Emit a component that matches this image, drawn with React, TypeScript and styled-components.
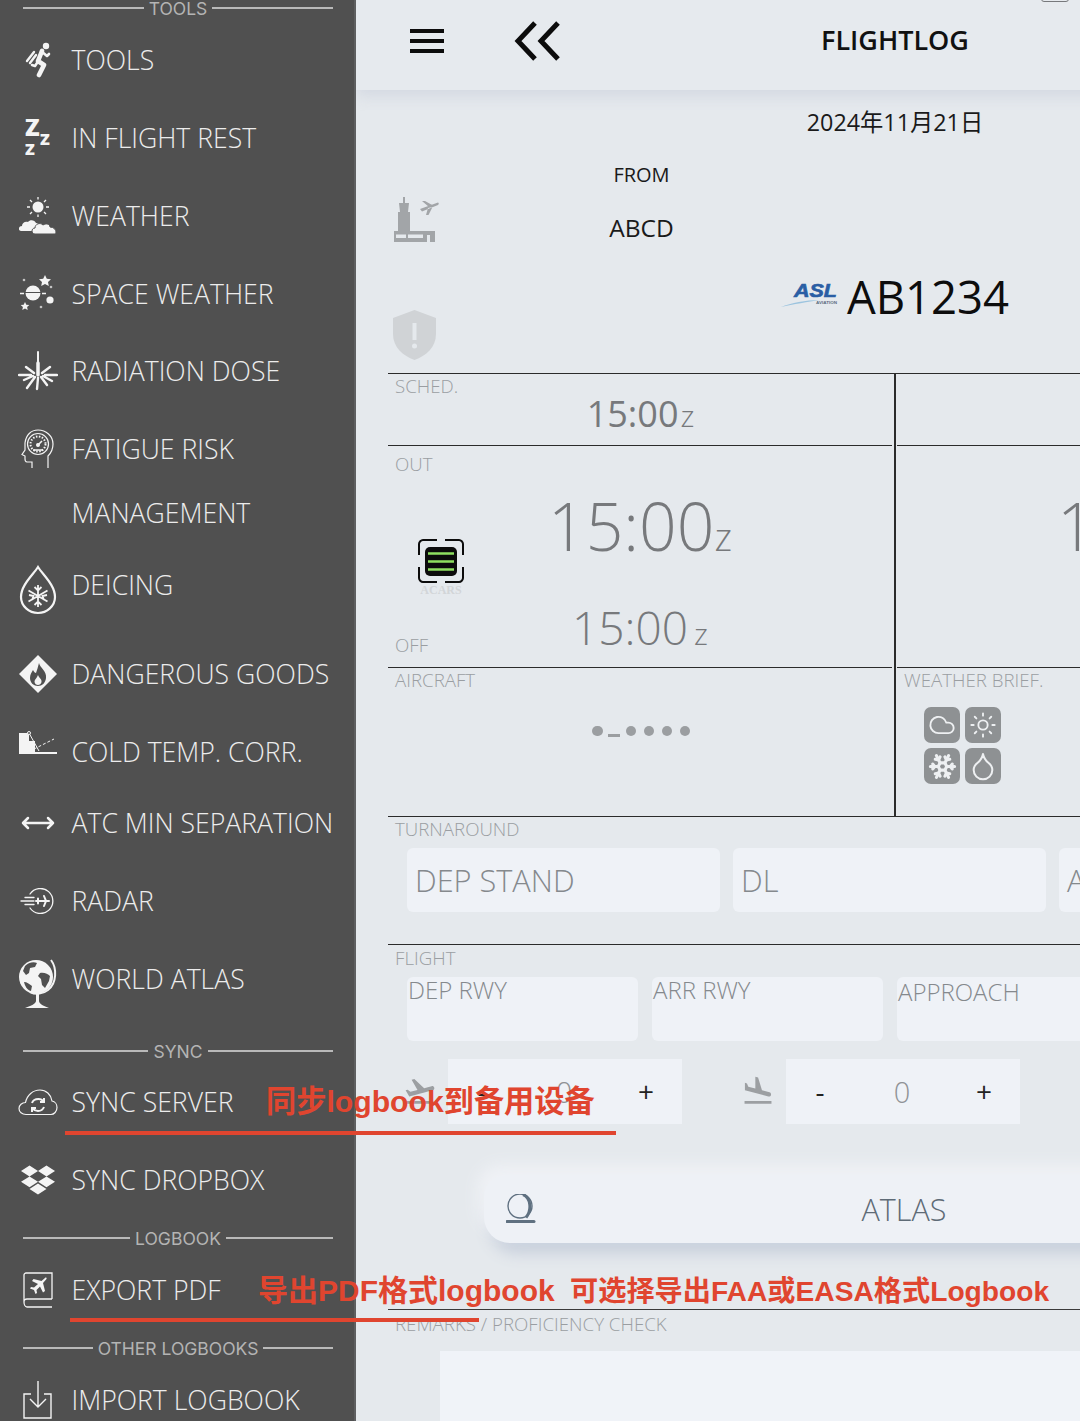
import React from 'react';
import styled, { createGlobalStyle } from 'styled-components';
import { Cloud, Droplet, Snowflake, Sun } from 'lucide-react';
import { FaDropbox } from 'react-icons/fa';
import { MdFlightLand, MdFlightTakeoff } from 'react-icons/md';

const GlobalStyle = createGlobalStyle`
  html, body {
    margin: 0;
    padding: 0;
    background: #e5e9ed;
  }
  body {
    font-family: "Open Sans", "Noto Sans CJK SC", sans-serif;
  }
  * {
    box-sizing: border-box;
  }
`;

const Page = styled.div`
  position: relative;
  display: flex;
  width: 1080px;
  height: 1421px;
  overflow: hidden;
`;

/* ---------- sidebar ---------- */

const Sidebar = styled.nav`
  position: relative;
  z-index: 1;
  flex: 0 0 356px;
  height: 1421px;
  overflow: hidden;
  background: #505050;
  border-right: 2px solid #5e5f60;
`;

const SectionRule = styled.div<{ $height: number }>`
  display: flex;
  align-items: center;
  gap: 5px;
  height: ${p => p.$height}px;
  padding: 0 21px 0 23px;
  color: #b4b4b4;
  font-family: Inter, "Liberation Sans", sans-serif;
  font-size: 17.5px;
  font-weight: 400;
  &::before,
  &::after {
    content: '';
    flex: 1;
    height: 1.5px;
    background: #b9b9b9;
  }
`;

const NavRow = styled.div<{ $height: number }>`
  display: flex;
  align-items: center;
  height: ${p => p.$height}px;
  padding-bottom: 2px;
  color: #ececec;
  font-size: 26.6px;
  font-weight: 300;
  white-space: nowrap;
`;

const Spacer = styled.div<{ $height: number }>`
  height: ${p => p.$height}px;
`;

const IconSlot = styled.span<{ $nudge?: number }>`
  display: flex;
  flex: 0 0 40px;
  justify-content: center;
  margin: ${p => (p.$nudge || 0) * 2}px 13.5px 0 18px;
  color: #f4f4f4;
`;

/* ---------- main ---------- */

const Main = styled.main`
  flex: 0 0 1078px;
  background: #e5e9ed;
`;

const TopBar = styled.header`
  position: relative;
  display: flex;
  align-items: center;
  justify-content: center;
  height: 90px;
  background: #e6eaee;
  box-shadow: 0 6px 14px rgba(190, 198, 212, 0.45);
`;

const TopButtons = styled.div`
  position: absolute;
  top: 21px;
  left: 54px;
  display: flex;
  align-items: center;
  gap: 70px;
`;

const Title = styled.h1`
  margin: 0 0 11px;
  color: #111;
  font-size: 27px;
  font-weight: 600;
`;

const StatusPill = styled.span`
  position: absolute;
  top: -8px;
  left: 685px;
  width: 28px;
  height: 10px;
  border: 1px solid #77797c;
  border-radius: 3px;
`;

const DateLine = styled.div`
  display: flex;
  align-items: center;
  justify-content: center;
  height: 66px;
  padding-bottom: 4px;
  color: #1a1a1a;
  font-size: 23.3px;
`;

const HeaderGrid = styled.section`
  display: grid;
  grid-template-columns: 507px;
  grid-template-rows: 104px 113px;
  width: 1014px;
  margin-left: 32px;
`;

const TowerSlot = styled.div`
  grid-area: 1 / 1;
  margin: 41px 0 0 5px;
`;

const Route = styled.div`
  display: flex;
  flex-direction: column;
  grid-area: 1 / 1;
  align-items: center;
  color: #1a1a1a;
`;

const RouteLabel = styled.span`
  height: 38px;
  font-size: 20px;
  line-height: 38px;
`;

const RouteValue = styled.span`
  margin-top: 15px;
  font-size: 24.5px;
  line-height: 38px;
`;

const ShieldSlot = styled.div`
  grid-area: 2 / 1;
  margin: 50px 0 0 5px;
`;

const FlightNumber = styled.div`
  display: flex;
  grid-area: 2 / 1 / 2 / 3;
  align-items: center;
  justify-content: center;
  width: 1014px;
  height: 72px;
  gap: 6px;
  color: #0d0d0d;
  font-size: 45.5px;
  font-weight: 500;
`;

const Table = styled.section`
  display: flex;
  width: 1014px;
  margin-left: 32px;
  border-top: 1.5px solid #2b2b2b;
  border-bottom: 1.5px solid #2b2b2b;
`;

const TableCol = styled.div<{ $right?: boolean }>`
  flex: 0 0 507px;
  height: 442px;
  padding: ${p => (p.$right ? '0 0 0 1px' : '0 3px 0 0')};
  border-left: ${p => (p.$right ? '2px solid #2b2b2b' : 'none')};
  margin-left: ${p => (p.$right ? '-1px' : '0')};
`;

const Cell = styled.div<{ $height: number; $last?: boolean }>`
  display: flex;
  flex-direction: column;
  height: ${p => p.$height}px;
  border-bottom: ${p => (p.$last ? 'none' : '1.5px solid #2b2b2b')};
`;

const FieldLabel = styled.div`
  height: 24px;
  padding-left: 7px;
  color: #9a9ea2;
  font-size: 18.7px;
  font-weight: 300;
  line-height: 24px;
  white-space: nowrap;
`;

const TimeText = styled.div<{ $size: number; $unit: number; $gap?: number }>`
  color: #77797c;
  font-size: ${p => p.$size}px;
  font-weight: 300;
  line-height: 1;
  text-align: center;
  white-space: nowrap;
  & small {
    margin-left: ${p => p.$gap || 0}px;
    font-size: ${p => p.$unit}px;
    font-weight: 300;
  }
`;

const SchedTime = styled(TimeText)`
  margin: -2px 0 0 1px;
  font-weight: 400;
`;

const BlockBody = styled.div`
  display: flex;
  flex: 1;
  flex-direction: column;
  align-items: center;
`;

const BlockLabels = styled.div`
  display: flex;
  flex: 1;
  align-self: stretch;
  flex-direction: column;
  justify-content: space-between;
  padding: 6px 0 10px;
`;

const OutRow = styled.div`
  display: grid;
  grid-template-columns: 130px 1fr 130px;
  flex: 1;
`;

const TimesCol = styled.div`
  display: flex;
  flex-direction: column;
  align-items: center;
  padding-top: 46px;
  gap: 46px;
`;

const Acars = styled.div`
  display: flex;
  flex-direction: column;
  align-items: center;
  width: 46px;
  margin: 26px 0 0 30px;
`;

const AcarsCaption = styled.span`
  margin-top: 1px;
  color: #d2d5d8;
  font-family: "Liberation Serif", serif;
  font-size: 12px;
  font-weight: 700;
  line-height: 13px;
`;

const RegDots = styled.div`
  display: flex;
  align-items: center;
  justify-content: center;
  gap: 7.5px;
  height: 72px;
  margin: 3px 0 0 2px;
`;

const RegDot = styled.span`
  width: 10.5px;
  height: 10.5px;
  border-radius: 50%;
  background: #9b9ea1;
`;

const RegDash = styled.span`
  width: 12px;
  height: 3px;
  margin: 9px -2px 0 -2px;
  background: #9b9ea1;
`;

const BriefGrid = styled.div`
  display: grid;
  grid-template-columns: 36px 36px;
  gap: 5px;
  margin: 15px 0 0 27px;
`;

const BriefTile = styled.span`
  display: flex;
  align-items: center;
  justify-content: center;
  width: 36px;
  height: 36px;
  border-radius: 7px;
  background: #8e9193;
  color: #eef0f2;
`;

const Section = styled.section`
  width: 1014px;
  margin-left: 32px;
  padding-top: 0.5px;
`;

const RuledSection = styled(Section)`
  height: 128px;
  padding-top: 0;
  border-bottom: 1.5px solid #2b2b2b;
`;

const InputRow = styled.div<{ $gap: number }>`
  display: flex;
  gap: ${p => p.$gap}px;
  margin: 7px 0 0 19px;
`;

const WideField = styled.div`
  flex: 0 0 313px;
  height: 64px;
  padding: 0 8px;
  overflow: hidden;
  border-radius: 6px;
  background: #eff2f7;
  color: #85898d;
  font-size: 30.7px;
  font-weight: 300;
  line-height: 64px;
  white-space: nowrap;
`;

const RunwayField = styled.div<{ $drop?: boolean }>`
  flex: 0 0 231px;
  height: 64px;
  padding: ${p => (p.$drop ? '2px' : '0')} 1px;
  border-radius: 6px;
  background: #eff2f7;
  color: #85898d;
  font-size: 24px;
  font-weight: 300;
  line-height: 1.05;
  white-space: nowrap;
`;

const Steppers = styled.div`
  display: flex;
  gap: 62px;
  margin: 18px 0 0 18px;
`;

const StepperGroup = styled.div`
  display: grid;
  grid-template-columns: 42px 234px;
  align-items: center;
`;

const StepperIcon = styled.span`
  display: flex;
  margin-left: -3px;
  color: #9c9fa2;
`;

const Stepper = styled.div`
  display: grid;
  grid-template-columns: 68px 96px 68px;
  align-items: center;
  height: 65px;
  background: #eff2f7;
  color: #222;
  font-size: 28px;
  font-weight: 400;
  text-align: center;
`;

const StepperValue = styled.span`
  color: #8f9396;
  font-size: 29px;
  font-weight: 300;
`;

const AtlasButton = styled.div`
  display: grid;
  grid-template-columns: 60px 1fr 60px;
  align-items: center;
  width: 840px;
  height: 68px;
  margin: 51px 0 0 128px;
  padding-left: 22px;
  border-radius: 22px 0 0 26px;
  background: #eef1f6;
  box-shadow: -6px -10px 16px #f0f2f6, 6px 10px 16px #c6cedb;
  color: #5e6b76;
  font-size: 30.5px;
  font-weight: 300;
`;

const AtlasLabel = styled.span`
  margin-left: -22px;
  text-align: center;
`;

const RemarkSection = styled(Section)`
  margin-top: 66px;
  padding-top: 2px;
  border-top: 1.5px solid #3a3a3a;
`;

const RemarkBox = styled.div`
  width: 900px;
  height: 90px;
  margin: 15px 0 0 52px;
  background: #f0f3f8;
`;

/* ---------- annotations laid over the screenshot ---------- */

const Note = styled.span<{ $x: number; $y: number; $size: number }>`
  position: absolute;
  z-index: 2;
  top: ${p => p.$y}px;
  left: ${p => p.$x}px;
  color: #e0452f;
  font-family: "Liberation Sans", "Noto Sans CJK SC", sans-serif;
  font-size: ${p => p.$size}px;
  font-weight: 700;
  line-height: 36px;
  white-space: pre;
`;

const NoteLine = styled.span<{ $x: number; $y: number; $width: number }>`
  position: absolute;
  z-index: 2;
  top: ${p => p.$y}px;
  left: ${p => p.$x}px;
  width: ${p => p.$width}px;
  height: 4px;
  background: #e0452f;
`;

/* ---------- drawn icons ---------- */

const JetpackIcon = () => (
  <svg width="26" height="36" viewBox="0 0 26 36" fill="none" stroke="currentColor" strokeLinecap="round" strokeLinejoin="round">
    <circle cx="21" cy="4" r="3.2" fill="currentColor" stroke="none" />
    <path d="M17 9 L13 19 L19 23 L14 33" strokeWidth="4.6" />
    <path d="M16 9 L22 14 L24 12 M14 18 L10 24 L7 23" strokeWidth="2.6" />
    <path d="M9 10 L2 19 M11 13 L5 21" strokeWidth="2.4" />
  </svg>
);

const ZzzIcon = () => (
  <svg width="32" height="38" viewBox="0 0 32 38" fill="currentColor" fontFamily="Open Sans, sans-serif" fontWeight="800">
    <text x="3" y="17" fontSize="24">Z</text>
    <text x="18" y="26" fontSize="16">Z</text>
    <text x="3" y="36" fontSize="16">Z</text>
  </svg>
);

const WeatherIcon = () => (
  <svg width="38" height="38" viewBox="0 0 38 38" fill="currentColor" stroke="currentColor">
    <circle cx="19" cy="10" r="5.5" stroke="none" />
    <path d="M19 0v2.5M19 17.5v2.5M8 10h3M27 10h3M11 3l2 2M27 3l-2 2M11 17l2-2M27 17l-2-2" strokeWidth="1.3" fill="none" />
    <path d="M2 34c-3 0-3-5 1-5 0-3 3-5 6-4 2-3 7-2 8 1 2 0 3 1 3 3l-4 5z" stroke="none" />
    <path d="M16 37c-4 0-4-6 0-6 0-4 5-6 8-3 3-2 7-1 7 2 4 0 6 3 6 5s-1 2-3 2z" stroke="#505050" strokeWidth="1" />
  </svg>
);

const SpaceIcon = () => (
  <svg width="38" height="38" viewBox="0 0 38 38" fill="currentColor" stroke="currentColor">
    <circle cx="14" cy="18" r="7.5" stroke="none" />
    <path d="M1 18.5h4M23 18.5h4" strokeWidth="1.5" />
    <path d="M6 17.5h16" stroke="#505050" strokeWidth="1" />
    <path d="M26 0l1.8 3.8 4.2.4-3 2.800.8 4.100-3.800-2-3.800 2 .8-4.100-3-2.800 4.200-.4zM6 27l1.300 2.800 3 .3-2.200 2 .6 3-2.700-1.500-2.700 1.500.6-3-2.200-2 3-.3z" stroke="none" />
    <circle cx="31" cy="25" r="3.6" stroke="none" />
    <circle cx="5" cy="5" r="1.3" stroke="none" opacity=".7" />
    <circle cx="32" cy="12" r="1.3" stroke="none" opacity=".7" />
    <circle cx="22" cy="32" r="1.3" stroke="none" opacity=".7" />
  </svg>
);

const RadiationIcon = () => (
  <svg width="40" height="40" viewBox="0 0 40 40" stroke="currentColor" strokeLinecap="round" fill="none">
    <path d="M20 1v22" strokeWidth="2" />
    <path d="M20 12v12" strokeWidth="3.5" />
    <path d="M1 24h12M27 24h12M17 26L9 37M23 26l6 8M20 27l-1 11M24 22l8-6M16 22L8 16M25 25l9 5M15 25l-9 4" strokeWidth="2.4" />
  </svg>
);

const FatigueIcon = () => (
  <svg width="34" height="40" viewBox="0 0 34 40" fill="none" stroke="currentColor" strokeWidth="1.2">
    <path d="M11 39v-6H6c-1.500 0-2-1.500-2-3v-3l-3-1.500 3-4.500v-7C5 6 10 1 17 1c8 0 15 6 15 14 0 5-2 9-5 12v12" />
    <circle cx="17" cy="15" r="10.5" />
    <circle cx="17" cy="15" r="7.5" strokeDasharray="1.5 1.5" strokeWidth="2" />
    <path d="M12 21h10M17 16l4-4" strokeWidth="1.6" />
    <circle cx="17" cy="16" r="1.4" fill="currentColor" />
  </svg>
);

const DeicingIcon = () => (
  <svg width="38" height="50" viewBox="0 0 38 50" fill="none" stroke="currentColor">
    <path d="M19 2C14 10 2 20 2 32c0 9 8 16 17 16s17-7 17-16C36 20 24 10 19 2z" strokeWidth="2.2" />
    <path d="M19 20v22M9.500 25.500l19 11M28.500 25.500l-19 11M15.500 22l3.500 3.500 3.500-3.500M15.500 40l3.500-3.500 3.500 3.500M10 30l4.500 1-1.500 4M28 30l-4.500 1 1.500 4" strokeWidth="1.8" />
  </svg>
);

const HazardIcon = () => (
  <svg width="38" height="38" viewBox="0 0 38 38">
    <path d="M19 0l19 19-19 19L0 19z" fill="currentColor" />
    <path d="M20 8c1 5 8 8 7 15-.5 5-4 8-8 8s-8-3-8-8c0-4 2-6 3-8 1 2 2 3 3 3 1-3 2-6 3-10z" fill="#505050" />
    <path d="M19 20c1 3 4 4 3.500 7-.3 2-2 3-3.500 3s-3.500-1-3.500-3.500c0-2 2.500-3.500 3.500-6.500z" fill="currentColor" />
  </svg>
);

const ColdTempIcon = () => (
  <svg width="38" height="24" viewBox="0 0 38 24" fill="currentColor" stroke="currentColor">
    <path d="M0 2h10v8h6v13H0z" stroke="none" />
    <path d="M16 22h22" strokeWidth="2" />
    <path d="M10 2l10 18" strokeWidth="1" fill="none" />
    <path d="M15 18L35 8" strokeWidth="1" strokeDasharray="3 2" fill="none" />
    <circle cx="10" cy="2" r="1.5" fill="#505050" strokeWidth="1" />
  </svg>
);

const SeparationIcon = () => (
  <svg width="34" height="14" viewBox="0 0 34 14" fill="none" stroke="currentColor" strokeWidth="2.5" strokeLinecap="round" strokeLinejoin="round">
    <path d="M2 7h30M7 2L2 7l5 5M27 2l5 5-5 5" />
  </svg>
);

const RadarIcon = () => (
  <svg width="36" height="26" viewBox="0 0 36 26" fill="none" stroke="currentColor" strokeLinecap="round">
    <path d="M10 6a12.500 12.500 0 1 1 0 14" strokeWidth="1.3" />
    <path d="M1 13h13M5 9.500h9M5 16.500h9" strokeWidth="1.3" />
    <path d="M16 13h13M24 8l2 5-2 5M18 10.500v5" strokeWidth="2" />
  </svg>
);

const GlobeIcon = () => (
  <svg width="40" height="54" viewBox="0 0 40 54">
    <circle cx="18" cy="20" r="17" fill="currentColor" />
    <path d="M7 9c3-3 8-5 12-3l-2 4-5 1-1 5-3 2-3-4zM22 16c4-1 8 1 10 3l-1 5-4 7-3-3-1-6-3-3zM6 25c3 0 5 2 8 4l-1 5c-4-1-6-5-7-9z" fill="#505050" />
    <path d="M33 3c6 8 6 23-3 30-5 4-12 5-18 2" fill="none" stroke="currentColor" strokeWidth="2" />
    <path d="M18 37v7c0 3-6 5-11 7h24c-5-2-10-4-10-7v-7z" fill="currentColor" />
  </svg>
);

const CloudSyncIcon = () => (
  <svg width="40" height="27" viewBox="0 0 40 27" fill="none" stroke="currentColor" strokeWidth="1.2">
    <path d="M8 25.500C4 25.500 1 23 1 19.500c0-3.500 3-6 6.500-6C9 6 15 1 22 1c6 0 11 4.500 12 11 3 .5 5 3.500 5 6.500 0 4-3 7-6 7z" />
    <path d="M14 14c1-3 4-4 6.500-4 2 0 4 1 5 2.500M26 9v4h-4M26 18c-1 2.500-3.500 4-6 4-2 0-4-1-5.500-2.500M14 23v-4h4" strokeWidth="2" />
  </svg>
);

const ExportIcon = () => (
  <svg width="30" height="37" viewBox="0 0 30 37" fill="none" stroke="currentColor" strokeWidth="1.3">
    <path d="M29 27H4c-2 0-3 1-3 3s1 5 3 5h25M1 30V3c0-1 1-2 2-2h26v26" />
    <path d="M22 6c1-1 2 0 1.500 1L20 11l2 8-2 1.500-3-6-3.500 3.500.5 3-1.500 1-1.500-4-4-1.500 1-1.500 3 .5L15 12 9 9l1.500-2 8 2z" fill="currentColor" stroke="none" />
  </svg>
);

const ImportIcon = () => (
  <svg width="30" height="38" viewBox="0 0 30 38" fill="none" stroke="currentColor" strokeWidth="1.4">
    <path d="M8 13H1v24h27V13h-7M15 0v25M7 18l8 8 8-8" />
  </svg>
);

const TowerIcon = () => (
  <svg width="46" height="46" viewBox="0 0 46 46" fill="#a2a5a8">
    <path d="M10 0h2v6h-2zM6 6h10l-1 9H7zM5 15h12v20H5z" />
    <path d="M1 34h41v11h-5V38h-3v7H1z" />
    <path d="M3 37.500h10V41H3zM15 37.500h15V41H15z" fill="#e5e9ed" />
    <path d="M27 12l18-6.500c1 .5 1 1.500 0 2.500L29 14.500zM29 4h3l8 4.500-4 1.500zM33 18h2.500l4-8-4.500 1z" />
  </svg>
);

const ShieldIcon = () => (
  <svg width="43" height="50" viewBox="0 0 43 50">
    <path d="M21.500 0L43 8v16c0 13-10 22-21.500 26C10 46 0 37 0 24V8z" fill="#d0d3d6" />
    <path d="M19.500 13h4v17h-4z" fill="#e5e9ed" />
    <circle cx="21.5" cy="36" r="2.5" fill="#e5e9ed" />
  </svg>
);

const AslLogo = () => (
  <svg width="60" height="27" viewBox="0 0 60 27">
    <path d="M0 24C10 20 25 17 38 17C28 19 12 21 0 24Z" fill="#9cc4df" />
    <text x="13" y="14" fill="#2a5ea4" stroke="#2a5ea4" strokeWidth=".6" fontFamily="Liberation Sans, sans-serif" fontSize="18" fontStyle="italic" fontWeight="700" textLength="43" lengthAdjust="spacingAndGlyphs">ASL</text>
    <text x="35" y="21" fill="#5b6b80" fontFamily="Liberation Sans, sans-serif" fontSize="4" fontWeight="700" textLength="21" lengthAdjust="spacingAndGlyphs">AVIATION</text>
  </svg>
);

const AcarsIcon = () => (
  <svg width="46" height="44" viewBox="0 0 46 44" fill="none">
    <path d="M19 1H5C3 1 1 3 1 5v11M27 1h14c2 0 4 2 4 4v11M1 28v11c0 2 2 4 4 4h14M45 28v11c0 2-2 4-4 4H27" stroke="#0c0c0c" strokeWidth="2" />
    <rect x="7" y="8" width="32" height="29" rx="5" fill="#0c0c0c" />
    <path d="M10 14.500h26M10 22.500h26M10 30.500h26" stroke="#8ee060" strokeWidth="2.6" />
  </svg>
);

const AtlasIcon = () => (
  <svg width="30" height="30" viewBox="0 0 30 30" fill="none" stroke="#5f7080">
    <ellipse cx="14" cy="12" rx="12" ry="12" strokeWidth="1.4" />
    <path d="M17 .5c8 3 9 16 3 23" strokeWidth="3" />
    <path d="M1 27.500h27" strokeWidth="3" strokeLinecap="round" />
  </svg>
);

const navItems: { label: string; height: number; icon?: React.ReactNode; nudge?: number }[] = [
  { label: 'TOOLS', height: 78, icon: <JetpackIcon /> },
  { label: 'IN FLIGHT REST', height: 78, icon: <ZzzIcon /> },
  { label: 'WEATHER', height: 78, icon: <WeatherIcon /> },
  { label: 'SPACE WEATHER', height: 77, icon: <SpaceIcon /> },
  { label: 'RADIATION DOSE', height: 78, icon: <RadiationIcon /> },
  { label: 'FATIGUE RISK', height: 78, icon: <FatigueIcon /> },
  { label: 'MANAGEMENT', height: 50 },
  { label: 'DEICING', height: 94, icon: <DeicingIcon />, nudge: 5 },
  { label: 'DANGEROUS GOODS', height: 84, icon: <HazardIcon /> },
  { label: 'COLD TEMP. CORR.', height: 72, icon: <ColdTempIcon />, nudge: -9 },
  { label: 'ATC MIN SEPARATION', height: 70, icon: <SeparationIcon /> },
  { label: 'RADAR', height: 86, icon: <RadarIcon /> },
  { label: 'WORLD ATLAS', height: 70, icon: <GlobeIcon />, nudge: 5 },
];

const NavItem = ({ label, height, icon, nudge }: { label: string; height: number; icon?: React.ReactNode; nudge?: number }) => (
  <NavRow $height={height}>
    <IconSlot $nudge={nudge}>{icon}</IconSlot>
    {label}
  </NavRow>
);

const FlightTime = ({ size, unit, gap }: { size: number; unit: number; gap?: number }) => (
  <TimeText $size={size} $unit={unit} $gap={gap}>
    15:00<small>z</small>
  </TimeText>
);

const Counter = () => (
  <Stepper>
    <span>-</span>
    <StepperValue>0</StepperValue>
    <span>+</span>
  </Stepper>
);

const App = () => (
  <>
    <GlobalStyle />
    <Page>
      <Sidebar>
        <SectionRule $height={16}>TOOLS</SectionRule>
        <Spacer $height={6} />
        {navItems.map(item => (
          <NavItem key={item.label} {...item} />
        ))}
        <Spacer $height={28} />
        <SectionRule $height={16}>SYNC</SectionRule>
        <NavItem label="SYNC SERVER" height={88} icon={<CloudSyncIcon />} />
        <NavItem label="SYNC DROPBOX" height={68} icon={<FaDropbox size={34} />} />
        <SectionRule $height={46}>LOGBOOK</SectionRule>
        <NavItem label="EXPORT PDF" height={60} icon={<ExportIcon />} />
        <SectionRule $height={54}>OTHER LOGBOOKS</SectionRule>
        <NavItem label="IMPORT LOGBOOK" height={52} icon={<ImportIcon />} />
      </Sidebar>

      <Main>
        <TopBar>
          <TopButtons>
            <svg width="34" height="40" viewBox="0 0 34 40" fill="#0c0c0c">
              <rect y="8" width="34" height="4" />
              <rect y="18" width="34" height="4" />
              <rect y="28" width="34" height="4" />
            </svg>
            <svg width="46" height="40" viewBox="0 0 46 40" fill="none" stroke="#0c0c0c" strokeWidth="5">
              <path d="M21 2L4 20l17 18M44 2L27 20l17 18" />
            </svg>
          </TopButtons>
          <Title>FLIGHTLOG</Title>
          <StatusPill />
        </TopBar>

        <DateLine>2024年11月21日</DateLine>
        <HeaderGrid>
          <TowerSlot>
            <TowerIcon />
          </TowerSlot>
          <Route>
            <RouteLabel>FROM</RouteLabel>
            <RouteValue>ABCD</RouteValue>
          </Route>
          <ShieldSlot>
            <ShieldIcon />
          </ShieldSlot>
          <FlightNumber>
            <AslLogo />
            AB1234
          </FlightNumber>
        </HeaderGrid>

        <Table>
          <TableCol>
            <Cell $height={72}>
              <FieldLabel>SCHED.</FieldLabel>
              <SchedTime $size={36} $unit={30} $gap={2}>
                15:00<small>z</small>
              </SchedTime>
            </Cell>
            <Cell $height={222}>
              <OutRow>
                <BlockLabels>
                  <FieldLabel>OUT</FieldLabel>
                  <Acars>
                    <AcarsIcon />
                    <AcarsCaption>ACARS</AcarsCaption>
                  </Acars>
                  <FieldLabel>OFF</FieldLabel>
                </BlockLabels>
                <TimesCol>
                  <FlightTime size={66} unit={38} />
                  <FlightTime size={46} unit={30} gap={6} />
                </TimesCol>
              </OutRow>
            </Cell>
            <Cell $height={148} $last>
              <FieldLabel>AIRCRAFT</FieldLabel>
              <RegDots>
                <RegDot />
                <RegDash />
                <RegDot />
                <RegDot />
                <RegDot />
                <RegDot />
              </RegDots>
            </Cell>
          </TableCol>
          <TableCol $right>
            <Cell $height={72} />
            <Cell $height={222}>
              <BlockBody>
                <TimesCol>
                  <FlightTime size={66} unit={38} />
                </TimesCol>
              </BlockBody>
            </Cell>
            <Cell $height={148} $last>
              <FieldLabel>WEATHER BRIEF.</FieldLabel>
              <BriefGrid>
                <BriefTile><Cloud size={28} strokeWidth={1.6} /></BriefTile>
                <BriefTile><Sun size={28} strokeWidth={1.6} /></BriefTile>
                <BriefTile><Snowflake size={29} strokeWidth={2.6} /></BriefTile>
                <BriefTile><Droplet size={32} strokeWidth={1.5} /></BriefTile>
              </BriefGrid>
            </Cell>
          </TableCol>
        </Table>

        <RuledSection>
          <FieldLabel>TURNAROUND</FieldLabel>
          <InputRow $gap={13}>
            <WideField>DEP STAND</WideField>
            <WideField>DL</WideField>
            <WideField>ARR STAND</WideField>
          </InputRow>
        </RuledSection>

        <Section>
          <FieldLabel>FLIGHT</FieldLabel>
          <InputRow $gap={14}>
            <RunwayField>DEP RWY</RunwayField>
            <RunwayField>ARR RWY</RunwayField>
            <RunwayField $drop>APPROACH</RunwayField>
          </InputRow>
          <Steppers>
            <StepperGroup>
              <StepperIcon>
                <MdFlightTakeoff size={34} />
              </StepperIcon>
              <Counter />
            </StepperGroup>
            <StepperGroup>
              <StepperIcon>
                <MdFlightLand size={34} />
              </StepperIcon>
              <Counter />
            </StepperGroup>
          </Steppers>
        </Section>

        <AtlasButton>
          <AtlasIcon />
          <AtlasLabel>ATLAS</AtlasLabel>
        </AtlasButton>

        <RemarkSection>
          <FieldLabel>REMARKS / PROFICIENCY CHECK</FieldLabel>
          <RemarkBox />
        </RemarkSection>
      </Main>

      <Note $x={266} $y={1084} $size={30.2}>同步logbook到备用设备</Note>
      <NoteLine $x={65} $y={1131} $width={551} />
      <Note $x={258} $y={1273} $size={30}>导出PDF格式logbook</Note>
      <Note $x={570} $y={1273} $size={28.2}>可选择导出FAA或EASA格式Logbook</Note>
      <NoteLine $x={70} $y={1318} $width={409} />
    </Page>
  </>
);

export default App;
